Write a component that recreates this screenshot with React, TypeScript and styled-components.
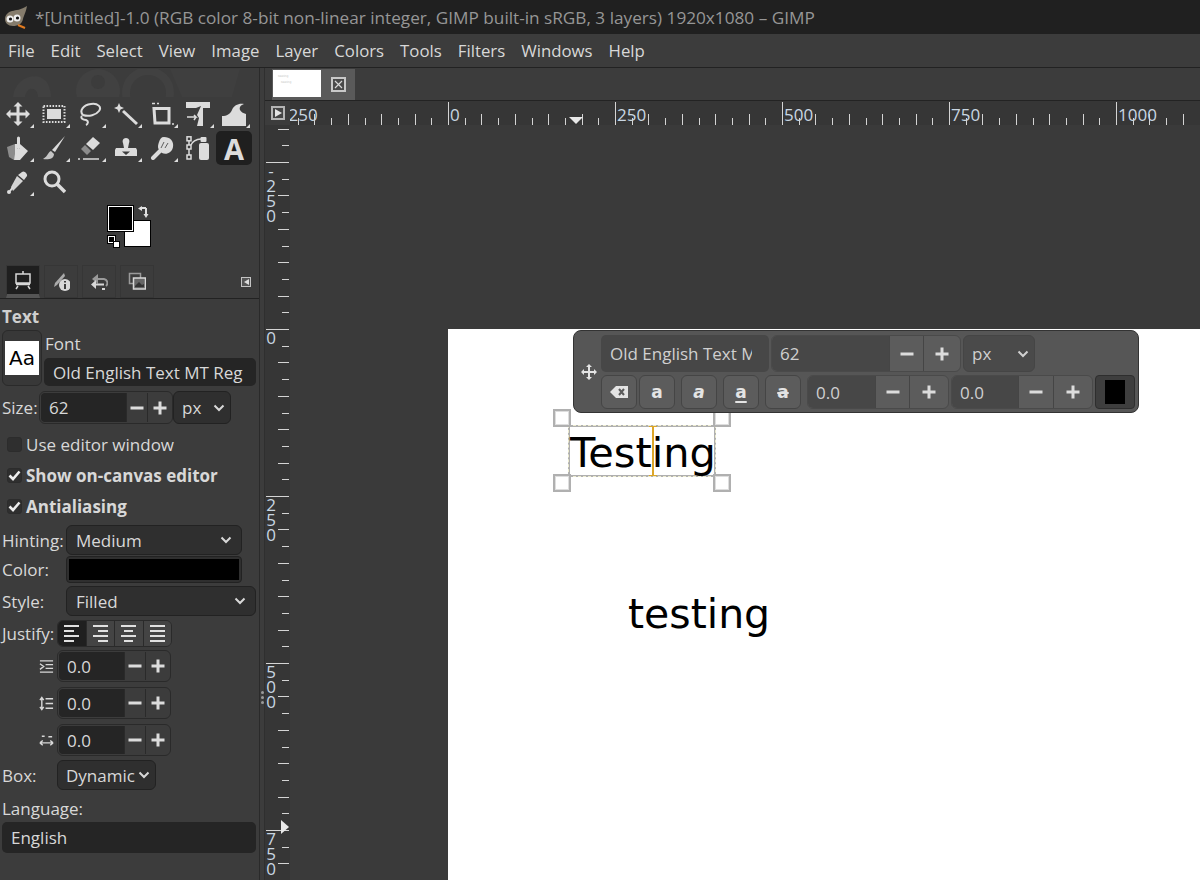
import React from "react";
import styled, { createGlobalStyle } from "styled-components";

const UI_FONT = `"Open Sans", "Noto Sans", sans-serif`;

const GlobalStyle = createGlobalStyle`
  html, body {
    margin: 0;
    padding: 0;
    background: #3c3c3c;
  }
  * {
    box-sizing: border-box;
  }
`;

const Window = styled.div`
  display: flex;
  flex-direction: column;
  width: 1200px;
  height: 880px;
  overflow: hidden;
  background: #3c3c3c;
  color: #d8d8d8;
  font-family: ${UI_FONT};
  font-size: 17px;
`;

const TitleBar = styled.div`
  display: flex;
  align-items: center;
  gap: 7px;
  flex: 0 0 34px;
  padding-left: 3px;
  background: #202020;
  color: #969696;
  font-size: 17.2px;
  white-space: nowrap;
`;

const MenuBar = styled.div`
  display: flex;
  align-items: center;
  gap: 16px;
  flex: 0 0 34px;
  padding: 0 0 1px 8px;
  border-bottom: 1px solid #222;
  font-size: 16.8px;
  white-space: nowrap;
`;

const Body = styled.div`
  display: flex;
  flex: 1;
  min-height: 0;
`;

const Dock = styled.aside`
  position: relative;
  display: flex;
  flex-direction: column;
  flex: 0 0 260px;
  border-right: 1px solid #2a2a2a;
`;

const Watermark = styled.svg`
  position: absolute;
  top: 1px;
  left: 10px;
`;

const ToolGrid = styled.div`
  position: relative;
  display: grid;
  grid-template-columns: repeat(7, 36px);
  grid-auto-rows: 34px;
  padding-top: 29px;
`;

const ToolCell = styled.div<{ $group?: boolean; $active?: boolean }>`
  position: relative;
  display: flex;
  align-items: center;
  justify-content: center;
  border-radius: 5px;
  background: ${({ $active }) => ($active ? "#1f1f1f" : "transparent")};
  color: #dcdcdc;

  &::after {
    content: "";
    display: ${({ $group }) => ($group ? "block" : "none")};
    position: absolute;
    right: 2px;
    bottom: 3px;
    border-left: 4px solid transparent;
    border-bottom: 4px solid #dcdcdc;
  }
`;

const TextToolGlyph = styled.span`
  font-size: 29px;
  font-weight: 700;
  line-height: 1;
`;

const ColorArea = styled.div`
  display: flex;
  justify-content: center;
  flex: 0 0 66px;
  padding: 7px 0 0 0;
`;

const ColorWidget = styled.div`
  position: relative;
  width: 46px;
  height: 46px;
  margin-left: 2px;
`;

const Swatch = styled.div<{ $bg: string; $size: number; $left: number; $top: number }>`
  position: absolute;
  left: ${({ $left }) => $left}px;
  top: ${({ $top }) => $top}px;
  width: ${({ $size }) => $size}px;
  height: ${({ $size }) => $size}px;
  background: ${({ $bg }) => $bg};
  border: 1px solid ${({ $bg }) => ($bg === "#000" ? "#fff" : "#000")};
  box-shadow: ${({ $bg }) => ($bg === "#000" ? "0 0 0 1px #000" : "none")};
`;

const SwapArrows = styled.svg`
  position: absolute;
  left: 30px;
  top: 0;
`;

const DockTabs = styled.div`
  display: flex;
  align-items: flex-end;
  gap: 4px;
  flex: 0 0 34px;
  padding-left: 6px;
  border-bottom: 1px solid #222;
`;

const DockTab = styled.div<{ $active?: boolean }>`
  display: flex;
  align-items: center;
  justify-content: center;
  width: 34px;
  height: 33px;
  border: 1px solid #363636;
  border-bottom: ${({ $active }) => ($active ? "4px solid #555" : "1px solid #363636")};
  background: ${({ $active }) => ($active ? "#1f1f1f" : "#3c3c3c")};
  color: #d8d8d8;
`;

const DockMenuButton = styled.div`
  display: flex;
  align-items: center;
  justify-content: center;
  align-self: center;
  width: 10px;
  height: 10px;
  margin-left: auto;
  margin-right: 8px;
  border: 1px solid #c4c4c4;
  background: #555;
`;

const DockMenuArrow = styled.span`
  border-top: 3px solid transparent;
  border-bottom: 3px solid transparent;
  border-right: 5px solid #ddd;
`;

const Options = styled.div`
  display: flex;
  flex-direction: column;
  padding: 0 3px 0 2px;
`;

const OptionsTitle = styled.div`
  display: flex;
  align-items: center;
  height: 31px;
  padding-top: 4px;
  font-weight: 700;
  color: #cfcfcf;
`;

const FontRow = styled.div`
  display: flex;
  gap: 2px;
  height: 56px;
`;

const FontPreviewButton = styled.div`
  display: flex;
  align-items: center;
  justify-content: center;
  flex: 0 0 40px;
  border: 1px solid #2a2a2a;
  border-radius: 6px;
  background: #383838;
`;

const FontPreview = styled.div`
  display: flex;
  align-items: center;
  justify-content: center;
  width: 34px;
  height: 34px;
  background: #fff;
  color: #000;
  font-family: "DejaVu Sans", sans-serif;
  font-size: 20px;
`;

const FontColumn = styled.div`
  display: flex;
  flex: 1;
  flex-direction: column;
  justify-content: space-between;
  min-width: 0;
`;

const FieldLabel = styled.div`
  padding-left: 1px;
  line-height: 28px;
  white-space: nowrap;
`;

const TextField = styled.div<{ $height?: number }>`
  display: flex;
  align-items: center;
  height: ${({ $height }) => $height ?? 31}px;
  padding-left: 9px;
  border-radius: 5px;
  background: #252525;
  overflow: hidden;
  white-space: nowrap;
`;

const FormRow = styled.div<{ $label: number; $height: number; $top?: number }>`
  display: grid;
  grid-template-columns: ${({ $label }) => $label}px auto 1fr;
  align-items: center;
  height: ${({ $height }) => $height}px;
  margin-top: ${({ $top }) => $top ?? 0}px;
`;

const RowLabel = styled.div`
  white-space: nowrap;
`;

const SpinBox = styled.div<{ $light?: boolean }>`
  display: flex;
  height: 100%;
  padding: ${({ $light }) => ($light ? "0" : "1px")};
  border: 1px solid ${({ $light }) => ($light ? "#4a4a4a" : "#2a2a2a")};
  border-radius: 6px;
  background: ${({ $light }) => ($light ? "#5c5c5c" : "#3c3c3c")};
  overflow: hidden;
`;

const SpinValue = styled.div<{ $width: number; $light?: boolean }>`
  display: flex;
  align-items: center;
  width: ${({ $width }) => $width}px;
  padding-left: 8px;
  background: ${({ $light }) => ($light ? "#474747" : "#252525")};
  color: ${({ $light }) => ($light ? "#d0d0d0" : "#d8d8d8")};
  overflow: hidden;
  white-space: nowrap;
  border-radius: 4px 0 0 4px;
`;

const SpinButton = styled.div<{ $width: number; $light?: boolean }>`
  display: flex;
  align-items: center;
  justify-content: center;
  width: ${({ $width }) => $width}px;
  border-left: 1px solid ${({ $light }) => ($light ? "#454545" : "#2a2a2a")};
  color: #dcdcdc;
`;

const SelectBox = styled.div<{ $width: number; $light?: boolean }>`
  display: flex;
  align-items: center;
  justify-content: space-between;
  width: ${({ $width }) => $width}px;
  height: 100%;
  padding: 0 ${({ $width }) => ($width < 110 ? 5 : 9)}px 0 ${({ $width }) => ($width < 110 ? 8 : 9)}px;
  border: 1px solid ${({ $light }) => ($light ? "#454545" : "#222")};
  border-radius: 6px;
  background: ${({ $light }) => ($light ? "#4a4a4a" : "#2f2f2f")};
  color: ${({ $light }) => ($light ? "#d0d0d0" : "#d8d8d8")};
  white-space: nowrap;
`;

const ColorButton = styled.div`
  width: 176px;
  height: 100%;
  padding: 2px;
  border: 1px solid #222;
  border-radius: 4px;
  background: #2f2f2f;
`;

const ColorFill = styled.div`
  height: 100%;
  background: #000;
`;

const CheckList = styled.div`
  display: flex;
  flex-direction: column;
  margin-top: 5px;
`;

const CheckRow = styled.div<{ $bold?: boolean }>`
  display: flex;
  align-items: center;
  gap: 4px;
  height: 31px;
  padding-left: 5px;
  font-weight: ${({ $bold }) => ($bold ? 700 : 400)};
  white-space: nowrap;
`;

const CheckBox = styled.div`
  display: flex;
  align-items: center;
  justify-content: center;
  width: 15px;
  height: 15px;
  border: 1px solid #2c2c2c;
  border-radius: 3px;
  background: #2f2f2f;
  color: #eee;
`;

const JustifyGroup = styled.div`
  display: flex;
  height: 100%;
  width: 115px;
  border: 1px solid #2a2a2a;
  border-radius: 6px;
  overflow: hidden;
`;

const JustifyButton = styled.div<{ $active?: boolean }>`
  display: flex;
  flex: 1;
  align-items: center;
  justify-content: center;
  background: ${({ $active }) => ($active ? "#1f1f1f" : "#444")};
  border-left: ${({ $active }) => ($active ? "none" : "1px solid #2a2a2a")};
  color: #e0e0e0;
`;

const SpinRow = styled.div<{ $top: number }>`
  display: flex;
  align-items: center;
  gap: 3px;
  height: 32px;
  margin-top: ${({ $top }) => $top}px;
  padding-left: 37px;
`;

const SpinIcon = styled.div`
  display: flex;
  justify-content: center;
  width: 15px;
  color: #d8d8d8;
`;

const LanguageLabel = styled.div`
  height: 25px;
  margin-top: 7px;
  line-height: 23px;
`;

const PaneHandle = styled.div`
  display: flex;
  flex: 0 0 5px;
  flex-direction: column;
  align-items: center;
  justify-content: center;
  gap: 2px;
  padding: 446px 0 0 0;
  border-right: 1px solid #2f2f2f;
`;

const HandleDot = styled.span`
  width: 3px;
  height: 3px;
  border-radius: 50%;
  background: #9a9a9a;
`;

const Main = styled.main`
  display: flex;
  flex: 1;
  flex-direction: column;
  min-width: 0;
`;

const ImageTabs = styled.div`
  display: flex;
  flex: 0 0 33px;
  padding: 1px 0 0 7px;
  border-bottom: 1px solid #232323;
`;

const ImageTab = styled.div`
  display: flex;
  align-items: flex-start;
  width: 83px;
  padding: 1px 0 0 1px;
  background: #5a5a5a;
`;

const TabThumb = styled.div`
  width: 48px;
  height: 27px;
  padding: 3px 5px;
  background: #fff;
  color: #c4c4c4;
  font-family: "DejaVu Sans", sans-serif;
  font-size: 3px;
  line-height: 6px;
`;

const TabThumbSecond = styled.div`
  padding-left: 3px;
`;

const TabClose = styled.svg`
  margin: 7px 0 0 10px;
`;

const RulerRow = styled.div`
  display: flex;
  flex: 0 0 24px;
  background: #363636;
`;

const RulerCorner = styled.div`
  display: flex;
  align-items: center;
  flex: 0 0 25px;
  padding-left: 6px;
  background: #3c3c3c;
`;

const CornerButton = styled.div`
  display: flex;
  align-items: center;
  justify-content: center;
  width: 14px;
  height: 14px;
  border: 2px solid #b4b4b4;
  background: #444;
`;

const CornerArrow = styled.span`
  border-top: 4px solid transparent;
  border-bottom: 4px solid transparent;
  border-left: 7px solid #e4e4e4;
`;

const CanvasRow = styled.div`
  display: flex;
  flex: 1;
  min-height: 0;
`;

const RulerSvg = styled.svg`
  display: block;
  flex: none;
  background: #363636;
`;

const RulerLabel = styled.text`
  fill: #c9d6e2;
  font-family: ${UI_FONT};
  font-size: 17px;
`;

const Canvas = styled.div`
  position: relative;
  flex: 1;
  overflow: hidden;
  background: #3a3a3a;
`;

const ImageLayer = styled.div`
  position: absolute;
  left: 158px;
  top: 204px;
  width: 752px;
  height: 551px;
  background: #fff;
`;

const CanvasText = styled.div<{ $left: number; $top: number; $size: number }>`
  position: absolute;
  left: ${({ $left }) => $left}px;
  top: ${({ $top }) => $top}px;
  color: #000;
  font-family: "DejaVu Sans", sans-serif;
  font-size: ${({ $size }) => $size}px;
  line-height: 50px;
  white-space: nowrap;
`;

const TextFrame = styled.div`
  position: absolute;
  left: 120px;
  top: 96px;
  width: 148px;
  height: 52px;
  border: 2px solid #b0b0b0;
  outline: 1px dashed #ecebcf;
  outline-offset: -1px;
`;

const Handle = styled.div<{ $left: number; $top: number }>`
  position: absolute;
  left: ${({ $left }) => $left}px;
  top: ${({ $top }) => $top}px;
  width: 18px;
  height: 18px;
  border: 2px solid #b0b0b0;
  background: #fff;
  box-shadow: inset 0 0 0 1px #dedede;
`;

const Caret = styled.div`
  position: absolute;
  left: 204px;
  top: 97px;
  width: 2px;
  height: 50px;
  background: #dca62a;

  &::before,
  &::after {
    content: "";
    position: absolute;
    left: -3px;
    width: 8px;
    height: 1px;
    background: #dca62a;
  }
  &::before {
    top: 0;
  }
  &::after {
    bottom: 0;
  }
`;

const EditorBar = styled.div`
  position: absolute;
  left: 125px;
  top: 1px;
  display: flex;
  gap: 3px;
  width: 566px;
  height: 83px;
  padding: 4px 3px 3px 0;
  border: 1px solid #333;
  border-radius: 8px;
  background: #565656;
`;

const EditorGrip = styled.div`
  display: flex;
  align-items: center;
  justify-content: center;
  flex: 0 0 24px;
  padding-left: 6px;
  color: #e4e4e4;
`;

const EditorRows = styled.div`
  display: flex;
  flex: 1;
  flex-direction: column;
  gap: 3px;
  color: #d0d0d0;
`;

const EditorRow = styled.div<{ $height: number }>`
  display: flex;
  gap: 2px;
  height: ${({ $height }) => $height}px;
`;

const EditorField = styled.div<{ $width: number }>`
  display: flex;
  align-items: center;
  width: ${({ $width }) => $width}px;
  padding-left: 9px;
  border-radius: 5px;
  background: #474747;
`;

const EditorFieldText = styled.div`
  width: 142px;
  overflow: hidden;
  white-space: nowrap;
`;

const FormatButton = styled.div<{ $gap?: number }>`
  display: flex;
  align-items: center;
  justify-content: center;
  width: 36px;
  margin-left: ${({ $gap }) => $gap ?? 0}px;
  border: 1px solid #454545;
  border-radius: 6px;
  background: #5c5c5c;
  color: #e4e4e4;
`;

const FormatLetter = styled.span<{ $variant: "bold" | "italic" | "underline" | "strike" }>`
  font-family: "DejaVu Sans", sans-serif;
  font-size: 17px;
  line-height: 1;
  font-weight: 700;
  font-style: ${({ $variant }) => ($variant === "italic" ? "italic" : "normal")};
  text-decoration: ${({ $variant }) =>
    $variant === "underline" ? "underline" : $variant === "strike" ? "line-through" : "none"};
  text-decoration-thickness: 2px;
  text-underline-offset: 3px;
`;

const SpinSlot = styled.div`
  margin-left: 4px;
`;

const EditorSwatch = styled.div`
  display: flex;
  align-items: center;
  justify-content: center;
  width: 40px;
  border: 1px solid #2e2e2e;
  border-radius: 4px;
  background: #3e3e3e;
`;

const EditorSwatchFill = styled.div`
  width: 20px;
  height: 24px;
  background: #000;
`;

const Minus = () => (
  <svg width="16" height="16" viewBox="0 0 16 16">
    <path d="M1.5 8h13" stroke="currentColor" strokeWidth="3" />
  </svg>
);

const Plus = () => (
  <svg width="16" height="16" viewBox="0 0 16 16">
    <path d="M1.5 8h13M8 1.5v13" stroke="currentColor" strokeWidth="3" />
  </svg>
);

const Chevron = () => (
  <svg width="12" height="8" viewBox="0 0 12 8">
    <path d="M1.5 1.5 6 6l4.5-4.5" fill="none" stroke="currentColor" strokeWidth="2" />
  </svg>
);

const CheckMark = () => (
  <svg width="13" height="11" viewBox="0 0 13 11">
    <path d="M1.5 5.5 5 9l6.5-7.5" fill="none" stroke="currentColor" strokeWidth="2.6" />
  </svg>
);

const MoveArrows = ({ size = 24 }: { size?: number }) => (
  <svg width={size} height={size} viewBox="0 0 24 24" fill="currentColor">
    <path d="M12 0l4.500 4.500H13.500V10.500H19.500V7.500L24 12l-4.500 4.500V13.500H13.500V19.500H16.500L12 24l-4.500-4.500H10.500V13.500H4.500V16.500L0 12l4.500-4.500V10.500H10.500V4.500H7.500Z" />
  </svg>
);

const toolIcons: { group?: boolean; paths: React.ReactNode }[] = [
  { group: true, paths: <MoveArrows /> },
  {
    group: true,
    paths: (
      <>
        <rect x="1.500" y="4" width="21" height="16" fill="none" stroke="currentColor" strokeWidth="2" strokeDasharray="1.600 1.400" />
        <rect x="5" y="7" width="14" height="10" fill="currentColor" />
      </>
    ),
  },
  {
    group: true,
    paths: (
      <path d="M5 13C1 9 5 3 13 2c7-1 11 3 8 7-3 4-10 6-16 4zM4 14c-2 2 1 4 4 4 3 1 2 4 0 5" fill="none" stroke="currentColor" strokeWidth="2" />
    ),
  },
  {
    group: true,
    paths: (
      <>
        <path d="M9 9l14 13" stroke="currentColor" strokeWidth="3" />
        <path d="M5 1l1.500 3.500L10 6 6.500 7.500 5 11 3.500 7.500 0 6l3.500-1.500z" fill="currentColor" />
      </>
    ),
  },
  {
    group: true,
    paths: (
      <>
        <path d="M4 6.500h15V21H5z" fill="none" stroke="currentColor" strokeWidth="3" />
        <path d="M2 1.500h3M7 1.500h2M23 21v2" stroke="currentColor" strokeWidth="1.500" />
      </>
    ),
  },
  {
    group: true,
    paths: (
      <>
        <path d="M0 0h24v6h-7v18h-6l2-8-2-3 4-9-5 2H0z" fill="currentColor" />
        <path d="M1 15h9l-2-2M10 15l-2 3" fill="none" stroke="currentColor" strokeWidth="1.500" />
      </>
    ),
  },
  {
    group: true,
    paths: <path d="M0 24V14c5 0 8-2 10-6 2-5 7-7 12-6-3 1-5 3-4 6 1 2 3 3 6 4v12z" fill="currentColor" />,
  },
  {
    group: true,
    paths: (
      <>
        <path d="M1 11l8-3 2 10-3 6-5-3z" fill="#8c8c8c" />
        <path d="M9 8h2v5h3V8l8 7-8 9h-6l1-6z" fill="currentColor" />
        <path d="M12.500 2v10" stroke="currentColor" strokeWidth="3" strokeLinecap="round" />
      </>
    ),
  },
  {
    group: true,
    paths: (
      <>
        <path d="M23 0L13 16l-3-2z" fill="currentColor" />
        <path d="M9 15c-3 1-3 5-8 8 5 1 11 0 11-5z" fill="#c4c4c4" />
      </>
    ),
  },
  {
    group: true,
    paths: (
      <>
        <path d="M15 1l7 6-7 7-7-6z" fill="currentColor" />
        <path d="M7 9l6 6-4 4-6-6z" fill="#8c8c8c" />
        <path d="M0 23h2M5 23h16" stroke="currentColor" strokeWidth="1.500" />
      </>
    ),
  },
  {
    group: true,
    paths: (
      <>
        <path d="M12 2c3 0 4 3 3 5l-1 5h8l1 2v6H1v-6l1-2h8l-1-5c-1-2 0-5 3-5z" fill="currentColor" />
        <path d="M8 15.500h8l-4 3.500z" fill="#3c3c3c" />
      </>
    ),
  },
  {
    group: true,
    paths: (
      <>
        <path d="M14 1c6 0 10 4 9 10s-7 8-11 6l-2-2c-3-3-2-6-1-9 1-3 2-5 5-5z" fill="currentColor" />
        <path d="M14 6l-3 6M18 7l-3 5" stroke="#3c3c3c" strokeWidth="0.800" />
        <path d="M10 15l-7 7" stroke="currentColor" strokeWidth="4" strokeLinecap="round" />
      </>
    ),
  },
  {
    paths: (
      <>
        <path d="M3 4v19M5 9c1-3 5-6 10-6" fill="none" stroke="currentColor" strokeWidth="1.500" />
        <rect x="1" y="0.800" width="4" height="4" fill="#3c3c3c" stroke="currentColor" strokeWidth="1.500" />
        <rect x="1" y="9" width="4" height="4" fill="#3c3c3c" stroke="currentColor" strokeWidth="1.500" />
        <rect x="1" y="19" width="4" height="4" fill="#3c3c3c" stroke="currentColor" strokeWidth="1.500" />
        <rect x="14.500" y="1" width="6" height="5" rx="1" fill="currentColor" />
        <rect x="13" y="7" width="10" height="17" rx="2" fill="currentColor" />
      </>
    ),
  },
  { paths: null },
  {
    group: true,
    paths: (
      <>
        <path d="M16 2c2-2 6 2 5 4l-3 4-6-5z" fill="currentColor" />
        <path d="M11 6l6 5-10 10-2-4z" fill="currentColor" opacity="0.950" />
        <path d="M7 17L4 21" stroke="currentColor" strokeWidth="2" />
        <circle cx="3" cy="22" r="2" fill="currentColor" />
      </>
    ),
  },
  {
    paths: (
      <>
        <circle cx="10" cy="9" r="7" fill="none" stroke="currentColor" strokeWidth="3" />
        <path d="M15 14l8 8" stroke="currentColor" strokeWidth="3.500" />
      </>
    ),
  },
];

const tabIcons = [
  <path key="0" d="M2 4h14v9H2zM4 16l-2 3M14 16l2 3M2 14.500h14M9 1v3" fill="none" stroke="currentColor" strokeWidth="1.500" />,
  <g key="1">
    <path d="M12 1L3 11l-1 4 3-2 8-9z" fill="#aaa" />
    <circle cx="13" cy="13" r="6" fill="currentColor" />
    <path d="M13 9v1.500M13 12v5" stroke="#3c3c3c" strokeWidth="2" />
  </g>,
  <g key="2">
    <path d="M5 7h9a4 4 0 0 1 2 7" fill="none" stroke="#9a9a9a" strokeWidth="2" />
    <path d="M8 2L2 7l6 5z" fill="#9a9a9a" />
    <path d="M14 12.500H5" fill="none" stroke="currentColor" strokeWidth="2" />
    <path d="M6 8l-5 4.500L6 17z" fill="currentColor" />
    <path d="M12 17h3" stroke="currentColor" strokeWidth="2" />
  </g>,
  <g key="3">
    <rect x="1.500" y="1.500" width="11" height="10" fill="#3c3c3c" stroke="#9a9a9a" strokeWidth="1.500" />
    <rect x="5.500" y="6" width="12" height="11" fill="#666" stroke="currentColor" strokeWidth="1.500" />
    <path d="M7 14l4-4 3 3 2-1v3H7z" fill="#333" />
  </g>,
];

const menuItems = ["File", "Edit", "Select", "View", "Image", "Layer", "Colors", "Tools", "Filters", "Windows", "Help"];

const PX_PER_UNIT = 167 / 250;

// tick list for a ruler, in px from the image origin
const rulerTicks = (from: number, to: number) => {
  const ticks: { pos: number; units: number }[] = [];
  for (let units = from; units <= to; units += 25) {
    ticks.push({ pos: units * PX_PER_UNIT, units });
  }
  return ticks;
};

const tickLength = (units: number) => {
  if (units % 250 === 0) return 23;
  return units % 50 === 0 ? 11 : 7;
};

const HorizontalRuler = () => {
  const origin = 158;
  return (
    <RulerSvg width={910} height={24}>
      {rulerTicks(-225, 1125).map(({ pos, units }) => (
        <path
          key={units}
          d={`M${Math.round(origin + pos) + 0.5} ${24 - tickLength(units)}V24`}
          stroke="#d4d4d4"
        />
      ))}
      {[-250, 0, 250, 500, 750, 1000].map((units) => (
        <RulerLabel key={units} x={origin + units * PX_PER_UNIT + 2} y={20}>
          {units}
        </RulerLabel>
      ))}
      <path d="M279 16h14l-7 7z" fill="#e8e8e8" />
    </RulerSvg>
  );
};

const VerticalRuler = () => {
  const origin = 204;
  return (
    <RulerSvg width={25} height={755}>
      {rulerTicks(-300, 825).map(({ pos, units }) => (
        <path
          key={units}
          d={`M${24 - tickLength(units)} ${Math.round(origin + pos) + 0.5}H24`}
          stroke="#d4d4d4"
        />
      ))}
      {[-250, 0, 250, 500, 750].map((units) =>
        String(units)
          .split("")
          .map((digit, i) => (
            <RulerLabel
              key={`${units}-${i}`}
              x={6}
              y={origin + units * PX_PER_UNIT + 15 + i * 15}
              textAnchor="middle"
            >
              {digit}
            </RulerLabel>
          ))
      )}
      <path d="M16 695l8 7-8 7z" fill="#e8e8e8" />
    </RulerSvg>
  );
};

interface SpinProps {
  value: string;
  valueWidth: number;
  buttonWidths: [number, number];
  light?: boolean;
}

const Spin: React.FC<SpinProps> = ({ value, valueWidth, buttonWidths, light }) => (
  <SpinBox $light={light}>
    <SpinValue $width={valueWidth} $light={light}>
      {value}
    </SpinValue>
    <SpinButton $width={buttonWidths[0]} $light={light}>
      <Minus />
    </SpinButton>
    <SpinButton $width={buttonWidths[1]} $light={light}>
      <Plus />
    </SpinButton>
  </SpinBox>
);

const Select: React.FC<{ value: string; width: number; light?: boolean }> = ({ value, width, light }) => (
  <SelectBox $width={width} $light={light}>
    {value}
    <Chevron />
  </SelectBox>
);

const justifyLines = [
  "M1 2h15M1 7h10M1 12h15M1 17h10",
  "M1 2h15M6 7h10M1 12h15M6 17h10",
  "M1 2h15M4 7h9M1 12h15M4 17h9",
  "M1 2h15M1 7h15M1 12h15M1 17h15",
];

const spinIcons = [
  <path key="indent" d="M1 1.500h14M7 5.500h8M7 9.500h8M1 13.500h14M1 4.500l4 3-4 3" fill="none" stroke="currentColor" strokeWidth="1.500" />,
  <path key="line" d="M7 2.500h8M7 7.500h8M7 12.500h8M3 2v11M1 4l2-3 2 3M1 11l2 3 2-3" fill="none" stroke="currentColor" strokeWidth="1.500" />,
  <path key="letter" d="M3 3h3M10 3.500h4M1 10h14M1 10l3-2.500M1 10l3 2.500M15 10l-3-2.500M15 10l-3 2.500" fill="none" stroke="currentColor" strokeWidth="1.500" />,
];

const App: React.FC = () => (
  <Window>
    <GlobalStyle />
    <TitleBar>
      <svg width="25" height="24" viewBox="0 0 25 24">
        <path d="M2 14c0-4 3-7 7-8 4-1 9-1 15-5-1 6-3 9-4 13-1 5-5 7-10 7-5 0-8-3-8-7z" fill="#857c6c" />
        <circle cx="7" cy="14" r="3.500" fill="#eee" />
        <circle cx="14" cy="13" r="3.500" fill="#eee" />
        <circle cx="7.500" cy="14" r="1.600" fill="#111" />
        <circle cx="14.500" cy="13" r="1.600" fill="#111" />
        <path d="M15 20l7 3" stroke="#e07a1f" strokeWidth="2" />
      </svg>
      *[Untitled]-1.0 (RGB color 8-bit non-linear integer, GIMP built-in sRGB, 3 layers) 1920x1080 – GIMP
    </TitleBar>
    <MenuBar>
      {menuItems.map((item) => (
        <span key={item}>{item}</span>
      ))}
    </MenuBar>
    <Body>
      <Dock>
        <Watermark width="240" height="28" viewBox="0 0 240 28">
          <path d="M3 28C5 8 27 2 36 12c3 4 5 10 5 16H28c0-10-11-12-13 0z" fill="#414141" />
          <circle cx="88" cy="22" r="22" fill="#414141" />
          <circle cx="88" cy="13" r="7" fill="#3c3c3c" />
          <circle cx="138" cy="24" r="22" fill="none" stroke="#414141" strokeWidth="8" />
          <path d="M160 0h70l-8 28h-50z" fill="#3f3f3f" />
        </Watermark>
        <ToolGrid>
          {toolIcons.map((tool, i) =>
            tool.paths ? (
              <ToolCell key={i} $group={tool.group}>
                <svg width="24" height="24" viewBox="0 0 24 24">
                  {tool.paths}
                </svg>
              </ToolCell>
            ) : (
              <ToolCell key={i} $active>
                <TextToolGlyph>A</TextToolGlyph>
              </ToolCell>
            )
          )}
        </ToolGrid>
        <ColorArea>
          <ColorWidget>
            <Swatch $bg="#fff" $size={27} $left={16} $top={14} />
            <Swatch $bg="#000" $size={25} $left={0} $top={0} />
            <SwapArrows width="12" height="12" viewBox="0 0 12 12">
              <path d="M8 2H2M8 2v8" fill="none" stroke="#e0e0e0" strokeWidth="2" />
              <path d="M4 0v5L0 2.500zM5.500 8h5L8 12z" fill="#e0e0e0" />
            </SwapArrows>
            <Swatch $bg="#000" $size={7} $left={0} $top={30} />
            <Swatch $bg="#fff" $size={7} $left={5} $top={35} />
          </ColorWidget>
        </ColorArea>
        <DockTabs>
          {tabIcons.map((icon, i) => (
            <DockTab key={i} $active={i === 0}>
              <svg width="18" height="20" viewBox="0 0 18 20">
                {icon}
              </svg>
            </DockTab>
          ))}
          <DockMenuButton>
            <DockMenuArrow />
          </DockMenuButton>
        </DockTabs>
        <Options>
          <OptionsTitle>Text</OptionsTitle>
          <FontRow>
            <FontPreviewButton>
              <FontPreview>Aa</FontPreview>
            </FontPreviewButton>
            <FontColumn>
              <FieldLabel>Font</FieldLabel>
              <TextField>Old English Text MT Reg</TextField>
            </FontColumn>
          </FontRow>
          <FormRow $label={37} $height={33} $top={5}>
            <RowLabel>Size:</RowLabel>
            <Spin value="62" valueWidth={85} buttonWidths={[21, 24]} />
            <Select value="px" width={58} />
          </FormRow>
          <CheckList>
            <CheckRow>
              <CheckBox />
              Use editor window
            </CheckRow>
            <CheckRow $bold>
              <CheckBox>
                <CheckMark />
              </CheckBox>
              Show on-canvas editor
            </CheckRow>
            <CheckRow $bold>
              <CheckBox>
                <CheckMark />
              </CheckBox>
              Antialiasing
            </CheckRow>
          </CheckList>
          <FormRow $label={64} $height={30} $top={3}>
            <RowLabel>Hinting:</RowLabel>
            <Select value="Medium" width={176} />
          </FormRow>
          <FormRow $label={64} $height={27} $top={1}>
            <RowLabel>Color:</RowLabel>
            <ColorButton>
              <ColorFill />
            </ColorButton>
          </FormRow>
          <FormRow $label={64} $height={30} $top={3}>
            <RowLabel>Style:</RowLabel>
            <Select value="Filled" width={190} />
          </FormRow>
          <FormRow $label={55} $height={27} $top={4}>
            <RowLabel>Justify:</RowLabel>
            <JustifyGroup>
              {justifyLines.map((d, i) => (
                <JustifyButton key={d} $active={i === 0}>
                  <svg width="17" height="19" viewBox="0 0 17 19">
                    <path d={d} stroke="currentColor" strokeWidth="2" />
                  </svg>
                </JustifyButton>
              ))}
            </JustifyGroup>
          </FormRow>
          {spinIcons.map((icon, i) => (
            <SpinRow key={i} $top={i === 0 ? 3 : 5}>
              <SpinIcon>
                <svg width="16" height="15" viewBox="0 0 16 15">
                  {icon}
                </svg>
              </SpinIcon>
              <Spin value="0.0" valueWidth={65} buttonWidths={[21, 24]} />
            </SpinRow>
          ))}
          <FormRow $label={55} $height={30} $top={4}>
            <RowLabel>Box:</RowLabel>
            <Select value="Dynamic" width={99} />
          </FormRow>
          <LanguageLabel>Language:</LanguageLabel>
          <TextField>English</TextField>
        </Options>
      </Dock>
      <PaneHandle>
        <HandleDot />
        <HandleDot />
        <HandleDot />
      </PaneHandle>
      <Main>
        <ImageTabs>
          <ImageTab>
            <TabThumb>
              testing
              <TabThumbSecond>testing</TabThumbSecond>
            </TabThumb>
            <TabClose width="15" height="15" viewBox="0 0 15 15">
              <rect x="1" y="1" width="13" height="13" fill="#4a4a4a" stroke="#c8c8c8" strokeWidth="2" />
              <path d="M4 4l7 7M11 4l-7 7" stroke="#d8d8d8" strokeWidth="1.200" />
            </TabClose>
          </ImageTab>
        </ImageTabs>
        <RulerRow>
          <RulerCorner>
            <CornerButton>
              <CornerArrow />
            </CornerButton>
          </RulerCorner>
          <HorizontalRuler />
        </RulerRow>
        <CanvasRow>
          <VerticalRuler />
          <Canvas>
            <ImageLayer>
              <CanvasText $left={180} $top={260} $size={41}>
                testing
              </CanvasText>
              <TextFrame />
              <CanvasText $left={122} $top={99} $size={41.5}>
                Testing
              </CanvasText>
              <Caret />
              <Handle $left={105} $top={80} />
              <Handle $left={265} $top={80} />
              <Handle $left={105} $top={145} />
              <Handle $left={265} $top={145} />
              <EditorBar>
                <EditorGrip>
                  <MoveArrows size={16} />
                </EditorGrip>
                <EditorRows>
                  <EditorRow $height={38}>
                    <EditorField $width={168}>
                      <EditorFieldText>Old English Text M</EditorFieldText>
                    </EditorField>
                    <Spin value="62" valueWidth={117} buttonWidths={[34, 37]} light />
                    <Select value="px" width={72} light />
                  </EditorRow>
                  <EditorRow $height={34}>
                    <FormatButton>
                      <svg width="18" height="14" viewBox="0 0 18 14">
                        <path d="M6 1h12v12H6L0 7z" fill="currentColor" />
                        <path d="M9 4l5 6M14 4l-5 6" stroke="#5c5c5c" strokeWidth="2" />
                      </svg>
                    </FormatButton>
                    <FormatButton>
                      <FormatLetter $variant="bold">a</FormatLetter>
                    </FormatButton>
                    <FormatButton $gap={4}>
                      <FormatLetter $variant="italic">a</FormatLetter>
                    </FormatButton>
                    <FormatButton $gap={4}>
                      <FormatLetter $variant="underline">a</FormatLetter>
                    </FormatButton>
                    <FormatButton $gap={4}>
                      <FormatLetter $variant="strike">a</FormatLetter>
                    </FormatButton>
                    <SpinSlot>
                      <Spin value="0.0" valueWidth={67} buttonWidths={[34, 39]} light />
                    </SpinSlot>
                    <Spin value="0.0" valueWidth={66} buttonWidths={[35, 39]} light />
                    <EditorSwatch>
                      <EditorSwatchFill />
                    </EditorSwatch>
                  </EditorRow>
                </EditorRows>
              </EditorBar>
            </ImageLayer>
          </Canvas>
        </CanvasRow>
      </Main>
    </Body>
  </Window>
);

export default App;
